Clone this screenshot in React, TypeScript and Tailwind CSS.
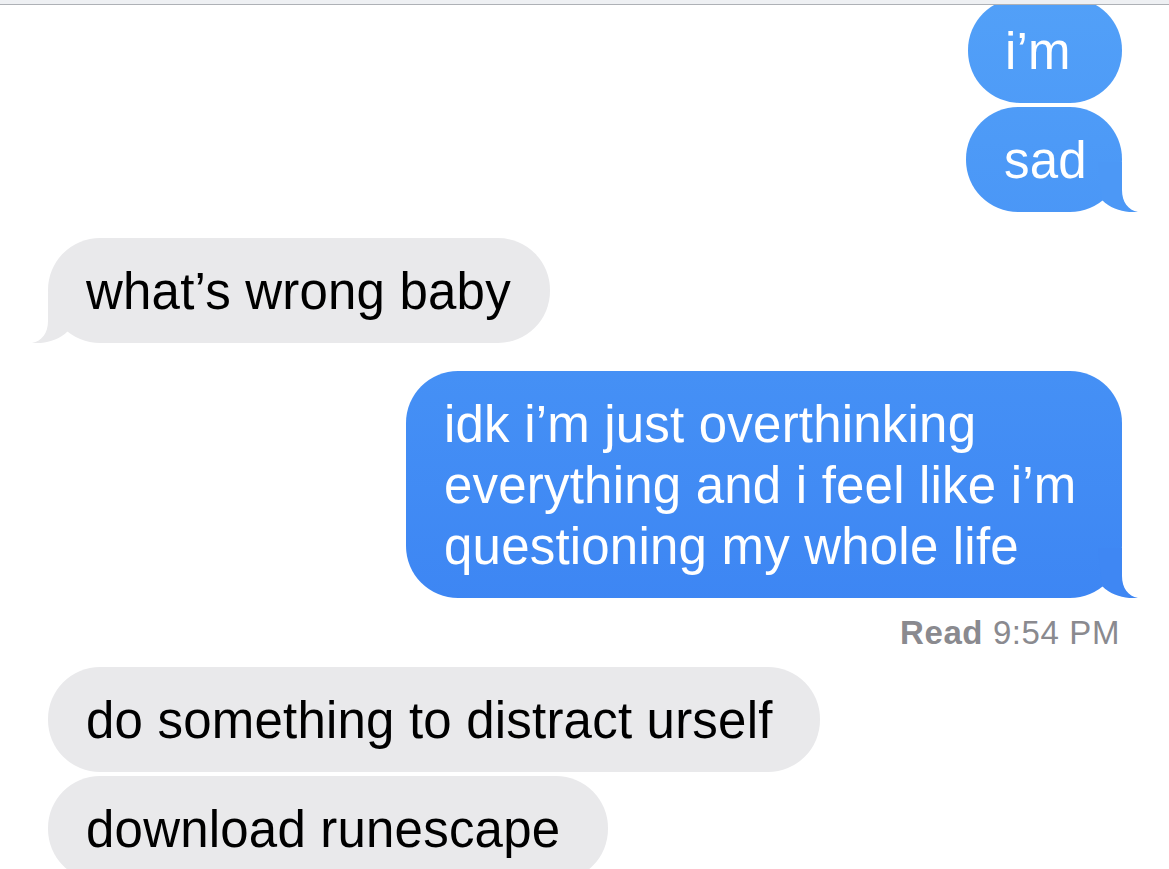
import React from "react";

function Tail({ color, side }: { color: string; side: "left" | "right" }) {
  return (
    <svg
      width="40"
      height="50"
      viewBox="0 0 40 50"
      className={
        side === "right"
          ? "absolute bottom-0 right-[-16px]"
          : "absolute bottom-0 left-[-16px] -scale-x-100"
      }
    >
      <path d="M24,0 L24,28 C24,40 30,48 40,50 C28,51 14,48 4,38 L0,0 Z" fill={color} />
    </svg>
  );
}

export default function App() {
  const font = { fontFamily: '"Liberation Sans", Arial, sans-serif' };
  return (
    <div
      className="relative h-[869px] w-full overflow-hidden bg-white text-[51px] leading-[61px] tracking-[0.2px]"
      style={font}
    >
      <div className="absolute inset-x-0 top-0 z-10 h-[5px] border-b border-[#aeb1b6] bg-[#eef0f3]" />

      <div className="flex flex-col px-[47px] pl-[48px]">
        {/* i'm */}
        <div className="mt-[-2px] flex justify-end">
          <div className="w-[154px] whitespace-nowrap rounded-[52px] bg-linear-to-b from-[#52a0f8] to-[#357af1] bg-fixed pb-[21px] pl-[37px] pt-[23px] text-white">
            i’m
          </div>
        </div>

        {/* sad */}
        <div className="mt-[4px] flex justify-end">
          <div className="relative w-[156px] whitespace-nowrap rounded-[52px] bg-linear-to-b from-[#52a0f8] to-[#357af1] bg-fixed pb-[21px] pl-[38px] pt-[23px] text-white">
            sad
            <Tail color="#4c98f6" side="right" />
          </div>
        </div>

        {/* what's wrong baby */}
        <div className="mt-[26px] flex justify-start">
          <div className="relative w-[502px] whitespace-nowrap rounded-[52px] bg-[#e9e9eb] pb-[21px] pl-[38px] pt-[23px] text-black">
            what’s wrong baby
            <Tail color="#e9e9eb" side="left" />
          </div>
        </div>

        {/* long blue */}
        <div className="mt-[28px] flex justify-end">
          <div className="relative w-[716px] whitespace-nowrap rounded-[52px] bg-linear-to-b from-[#52a0f8] to-[#357af1] bg-fixed pb-[21px] pl-[38px] pt-[23px] text-white">
            idk i’m just overthinking
            <br />
            everything and i feel like i’m
            <br />
            questioning my whole life
            <Tail color="#3f87f3" side="right" />
          </div>
        </div>

        {/* read receipt */}
        <div className="mt-[18px] flex justify-end pr-[2px] text-[33px] leading-[33px] tracking-[0.6px] text-[#8a8a8f]">
          <span className="font-bold">Read</span>
          <span>&nbsp;9:54 PM</span>
        </div>

        {/* do something */}
        <div className="mt-[18px] flex justify-start">
          <div className="w-[772px] whitespace-nowrap rounded-[52px] bg-[#e9e9eb] pb-[21px] pl-[38px] pt-[23px] text-black">
            do something to distract urself
          </div>
        </div>

        {/* download runescape */}
        <div className="mt-[4px] flex justify-start">
          <div className="w-[560px] whitespace-nowrap rounded-[52px] bg-[#e9e9eb] pb-[21px] pl-[38px] pt-[23px] text-black">
            download runescape
          </div>
        </div>
      </div>
    </div>
  );
}
